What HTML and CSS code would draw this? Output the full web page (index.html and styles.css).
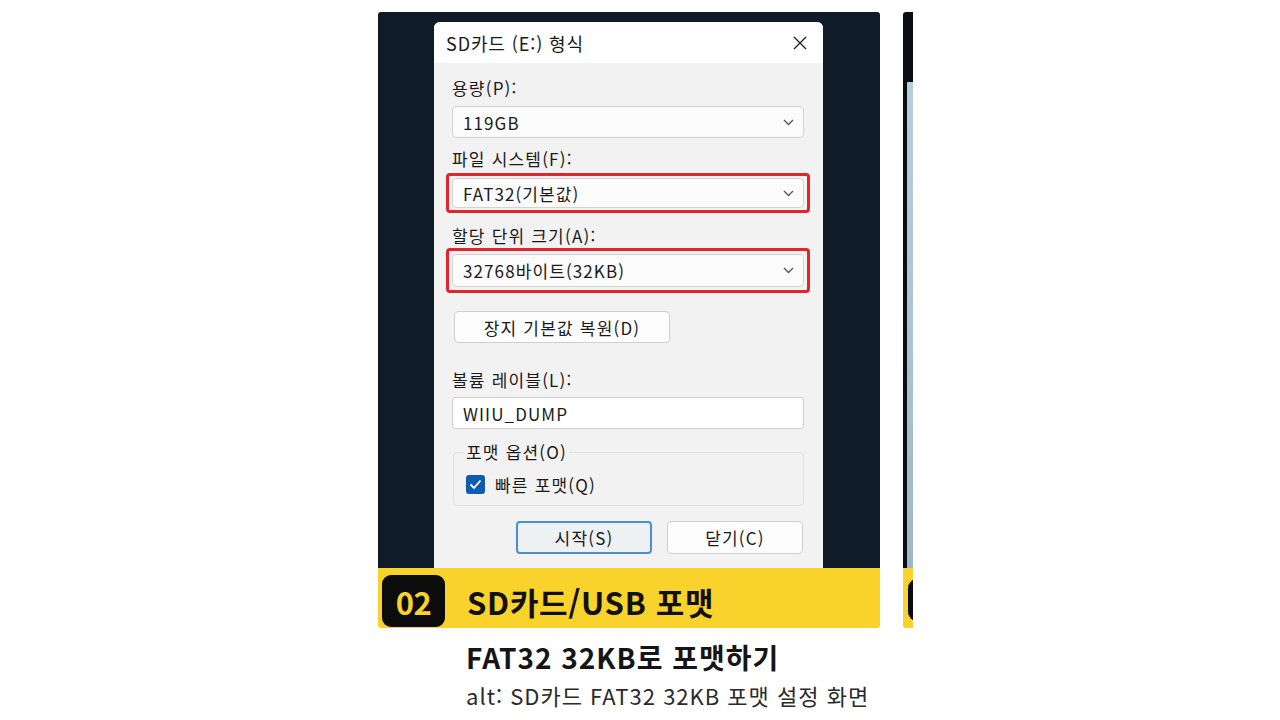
FILE: index.html
```html
<!DOCTYPE html>
<html lang="ko">
<head>
<meta charset="utf-8">
<title>SD카드/USB 포맷</title>
<link rel="stylesheet" href="styles.css">
</head>
<body>
<div class="strip">
  <div class="card">
    <div class="shot">
      <div class="dialog">
        <div class="titlebar">
          <span class="title">SD카드 (E:) 형식</span>
          <svg class="close" width="16" height="16" viewBox="0 0 16 16"><path d="M2 2 L14 14 M14 2 L2 14" stroke="#222" stroke-width="1.4" fill="none"/></svg>
        </div>
        <div class="body">
          <div class="label first">용량(P):</div>
          <div class="select"><span>119GB</span><svg class="chev" width="11" height="7" viewBox="0 0 11 7"><path d="M1 1 L5.5 5.5 L10 1" stroke="#555" stroke-width="1.3" fill="none"/></svg></div>
          <div class="label l2">파일 시스템(F):</div>
          <div class="hl hl1"><div class="select short"><span>FAT32(기본값)</span><svg class="chev" width="11" height="7" viewBox="0 0 11 7"><path d="M1 1 L5.5 5.5 L10 1" stroke="#555" stroke-width="1.3" fill="none"/></svg></div></div>
          <div class="label l3">할당 단위 크기(A):</div>
          <div class="hl hl2"><div class="select"><span>32768바이트(32KB)</span><svg class="chev" width="11" height="7" viewBox="0 0 11 7"><path d="M1 1 L5.5 5.5 L10 1" stroke="#555" stroke-width="1.3" fill="none"/></svg></div></div>
          <div class="btn restore">장지 기본값 복원(D)</div>
          <div class="label l4">볼륨 레이블(L):</div>
          <div class="input">WIIU_DUMP</div>
          <fieldset class="group">
            <legend>포맷 옵션(O)</legend>
            <div class="check-row">
              <span class="checkbox"><svg width="13" height="11" viewBox="0 0 13 11"><path d="M1.5 5.5 L5 9 L11.5 1.5" stroke="#fff" stroke-width="1.8" fill="none"/></svg></span>
              <span>빠른 포맷(Q)</span>
            </div>
          </fieldset>
          <div class="actions">
            <div class="btn primary">시작(S)</div>
            <div class="btn">닫기(C)</div>
          </div>
        </div>
      </div>
    </div>
    <div class="banner">
      <div class="badge">02</div>
      <div class="banner-title">SD카드/USB 포맷</div>
    </div>
    <div class="caption">
      <div class="subtitle">FAT32 32KB로 포맷하기</div>
      <div class="alt">alt: SD카드 FAT32 32KB 포맷 설정 화면</div>
    </div>
  </div>
  <div class="card peek">
    <div class="shot dark">
      <div class="screen"></div>
    </div>
    <div class="banner">
      <div class="badge small"></div>
    </div>
  </div>
</div>
</body>
</html>
```

FILE: styles.css
```css
* { box-sizing: border-box; }
html, body { margin: 0; padding: 0; background: #ffffff; }
body {
  font-family: "Noto Sans CJK KR", "Noto Sans", sans-serif;
  color: #1b1b1b;
  width: 1280px;
  height: 720px;
  overflow: hidden;
}
.strip {
  display: flex;
  align-items: flex-start;
  gap: 23px;
  margin-left: 378px;
  padding-top: 12px;
}
.card {
  flex: 0 0 502px;
  width: 502px;
  display: flex;
  flex-direction: column;
}
.card.peek {
  flex: 0 0 10px;
  width: 10px;
  overflow: hidden;
}
.peek .shot, .peek .banner { width: 502px; flex: none; }
.shot {
  height: 556px;
  background: #0f1b26;
  border-radius: 3px 3px 0 0;
  overflow: hidden;
  padding: 10px 0 0 56px;
}
.dialog {
  width: 389px;
  height: 620px;
  background: #f2f2f2;
  border-radius: 6px 6px 0 0;
  overflow: hidden;
}
.titlebar {
  height: 41px;
  background: #ffffff;
  display: flex;
  align-items: center;
  justify-content: space-between;
  padding: 0 15px 0 12px;
}
.title { font-size: 18px; letter-spacing: 0.9px; color: #1a1a1a; }
.body { padding: 15px 19px 0 18px; display: flex; flex-direction: column; }
.label { font-size: 17px; letter-spacing: 1.2px; line-height: 20px; height: 20px; color: #1a1a1a; }
.label.l2 { margin-top: 11px; }
.label.l3 { margin-top: 13px; }
.label.l4 { margin-top: 27px; }
.select {
  margin-top: 8px;
  height: 32px;
  background: #fbfbfb;
  border: 1px solid #d3d3d3;
  border-radius: 4px;
  display: flex;
  align-items: center;
  justify-content: space-between;
  padding: 0 9px 0 10px;
  font-size: 17px;
  letter-spacing: 1.1px;
  color: #1a1a1a;
}
.hl {
  border: 3px solid #e1252b;
  border-radius: 4px;
  margin: 0 -6px;
  padding: 3px 3px;
}
.hl .select { margin-top: 0; }
.hl1 { margin-top: 4px; height: 40px; padding: 2px 3px; }
.hl1 .select.short { height: 30px; }
.hl2 { margin-top: 2px; height: 45px; padding: 3px 3px; }
.hl2 .select { height: 33px; }
.btn {
  height: 33px;
  border: 1px solid #cfcfcf;
  border-radius: 4px;
  background: #fdfdfd;
  display: flex;
  align-items: center;
  justify-content: center;
  font-size: 17px;
  letter-spacing: 1.2px;
  color: #1a1a1a;
}
.btn.restore {
  margin-top: 18px;
  margin-left: 2px;
  width: 216px;
  height: 32px;
}
.input {
  margin-top: 7px;
  height: 32px;
  background: #ffffff;
  border: 1px solid #cfcfcf;
  border-radius: 3px;
  display: flex;
  align-items: center;
  padding: 0 10px;
  font-size: 17px;
  letter-spacing: 1.1px;
  color: #1a1a1a;
}
.group {
  margin: 13px 0 0 1px;
  padding: 10px 12px 6px 12px;
  border: 1px solid #e0e0e0;
  border-radius: 4px;
  height: 64px;
}
.group legend {
  padding: 0 2px;
  margin-left: -2px;
  font-size: 17px;
  letter-spacing: 1.2px;
  line-height: 20px;
  color: #1a1a1a;
}
.check-row {
  display: flex;
  align-items: center;
  gap: 10px;
  font-size: 17px;
  letter-spacing: 1.2px;
  color: #1a1a1a;
}
.checkbox {
  width: 19px;
  height: 19px;
  background: #0f5cae;
  border-radius: 3px;
  display: flex;
  align-items: center;
  justify-content: center;
}
.actions {
  margin-top: 15px;
  display: flex;
  justify-content: flex-end;
  gap: 15px;
  padding-right: 1px;
}
.actions .btn { width: 136px; }
.btn.primary {
  background: #eef1f4;
  border: 2px solid #4a90cf;
}
.banner {
  height: 60px;
  background: #f9d22c;
  border-radius: 0 0 3px 3px;
  display: flex;
  align-items: center;
  padding: 6px 0 0 4px;
}
.badge {
  width: 63px;
  height: 52px;
  background: #0c0c0c;
  border-radius: 9px;
  color: #f9d22c;
  font-size: 31px;
  font-weight: 700;
  display: flex;
  align-items: center;
  justify-content: center;
  letter-spacing: -0.5px;
}
.banner-title {
  margin-left: 22px;
  font-size: 31px;
  font-weight: 700;
  color: #111;
  letter-spacing: 0.7px;
  white-space: nowrap;
}
.caption { padding-left: 88px; white-space: nowrap; }
.subtitle {
  margin-top: 11px;
  font-size: 28px;
  line-height: 36px;
  font-weight: 700;
  color: #151515;
  letter-spacing: 1px;
}
.alt {
  margin-top: 6px;
  font-size: 22px;
  line-height: 28px;
  color: #2a2a2a;
  letter-spacing: 1px;
}
.shot.dark {
  background: #0a0d11;
  padding: 70px 0 0 4px;
}
.screen {
  height: 490px;
  background: linear-gradient(180deg, #b8ceda 0%, #a9c2d1 60%, #9db7c6 100%);
}
.peek .banner { padding: 3px 0 0 5px; }
.badge.small { height: 42px; }
```
